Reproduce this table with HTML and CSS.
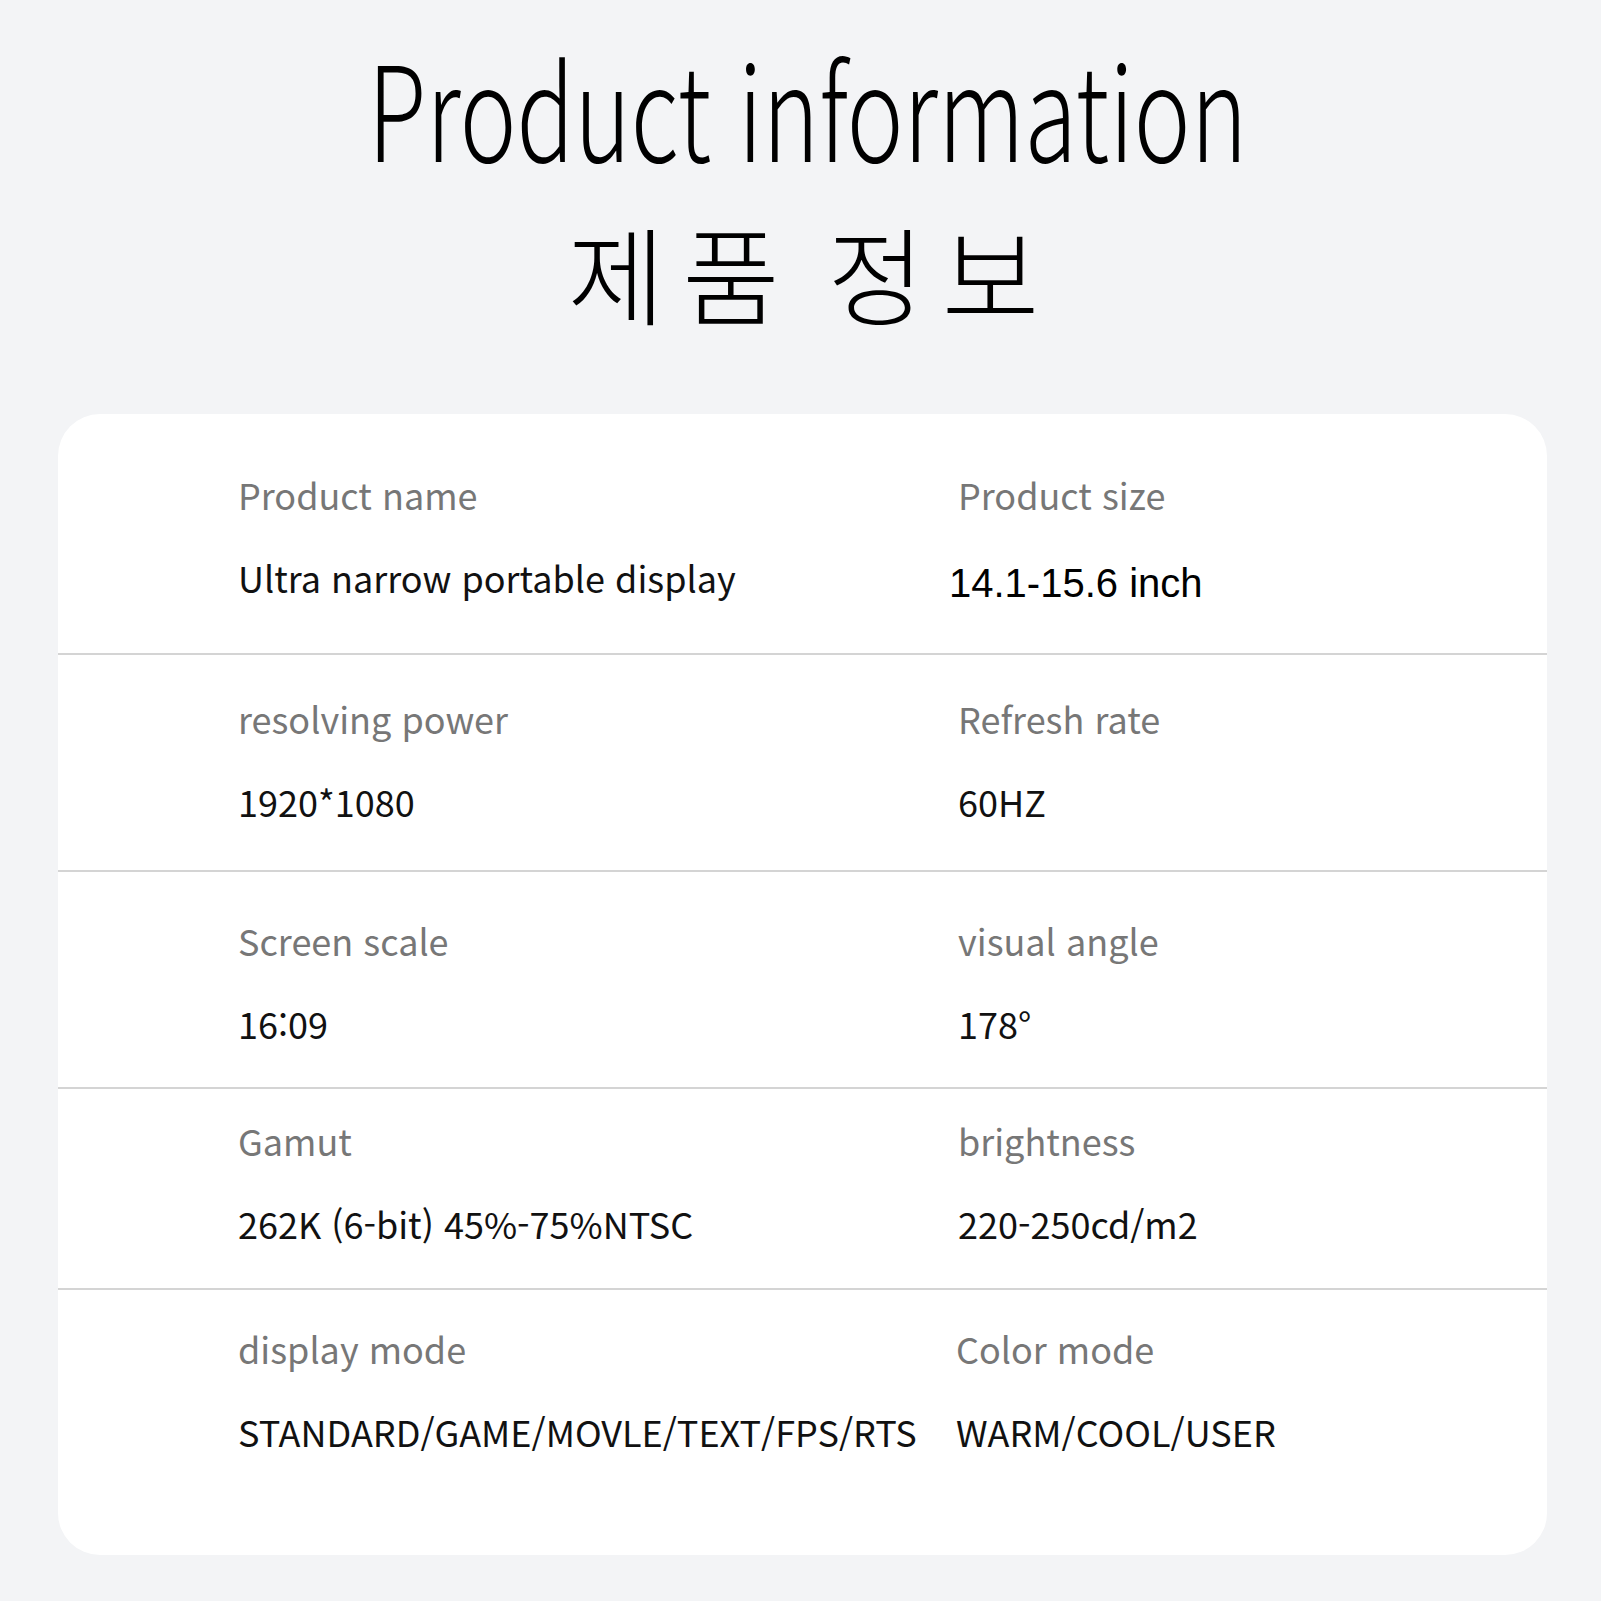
FILE: index.html
```html
<!DOCTYPE html>
<html lang="ko">
<head>
<meta charset="utf-8">
<title>Product information</title>
<link rel="stylesheet" href="styles.css">
</head>
<body>
<header class="hero">
  <h1 class="title-en"><span class="squeeze">Product information</span></h1>
  <p class="title-ko">제품 정보</p>
</header>
<section class="card">
  <div class="row row-1">
    <div class="cell"><div class="label">Product name</div><div class="value">Ultra narrow portable display</div></div>
    <div class="cell"><div class="label">Product size</div><div class="value value-arial"><span class="arial-shift">14.1-15.6 inch</span></div></div>
  </div>
  <div class="row row-2">
    <div class="cell"><div class="label">resolving power</div><div class="value">1920*1080</div></div>
    <div class="cell"><div class="label">Refresh rate</div><div class="value">60HZ</div></div>
  </div>
  <div class="row row-3">
    <div class="cell"><div class="label">Screen scale</div><div class="value">16:09</div></div>
    <div class="cell"><div class="label">visual angle</div><div class="value">178°</div></div>
  </div>
  <div class="row row-4">
    <div class="cell"><div class="label">Gamut</div><div class="value">262K (6-bit) 45%-75%NTSC</div></div>
    <div class="cell"><div class="label">brightness</div><div class="value">220-250cd/m2</div></div>
  </div>
  <div class="row row-5">
    <div class="cell"><div class="label">display mode</div><div class="value">STANDARD/GAME/MOVLE/TEXT/FPS/RTS</div></div>
    <div class="cell cell-shift"><div class="label">Color mode</div><div class="value">WARM/COOL/USER</div></div>
  </div>
</section>
</body>
</html>
```
FILE: styles.css
```css
html, body {
  margin: 0;
  padding: 0;
}
body {
  background: #f3f4f6;
  font-family: "Noto Sans CJK KR", "Noto Sans", sans-serif;
  color: #111;
  width: 1601px;
  height: 1601px;
  overflow: hidden;
}
.hero {
  text-align: center;
  padding-top: 30px;
  height: 384px;
  box-sizing: border-box;
}
.title-en {
  margin: 0;
  padding-left: 14px;
  font-weight: 300;
  font-size: 132px;
  line-height: 150px;
  color: #000;
}
.squeeze {
  display: inline-block;
  transform: scaleX(0.725);
  transform-origin: center;
  white-space: nowrap;
}
.title-ko {
  margin: 26px 0 0;
  font-weight: 300;
  font-size: 106px;
  line-height: 130px;
  letter-spacing: 17px;
  word-spacing: -16px;
  text-indent: 23px;
  color: #000;
}
.card {
  margin: 30px 54px 0 58px;
  background: #fff;
  border-radius: 42px;
  overflow: hidden;
}
.row {
  display: grid;
  grid-template-columns: 720px 1fr;
  padding-left: 180px;
  border-bottom: 2px solid #d4d4d4;
}
.row-5 { border-bottom: none; }
.row-1 { padding-top: 60px; padding-bottom: 56px; }
.row-2 { padding-top: 43px; padding-bottom: 49px; }
.row-3 { padding-top: 48px; padding-bottom: 44px; }
.row-4 { padding-top: 31px; padding-bottom: 45px; }
.row-5 { padding-top: 38px; padding-bottom: 104px; }
.cell {
  display: flex;
  flex-direction: column;
  gap: 43px;
}
.cell-shift { margin-left: -2px; }
.label {
  font-size: 36px;
  line-height: 40px;
  color: #777;
  white-space: nowrap;
}
.value {
  font-size: 36px;
  line-height: 40px;
  color: #111;
  white-space: nowrap;
}
.value-arial {
  font-family: "Liberation Sans", Arial, sans-serif;
  font-size: 40px;
  margin-left: -9px;
  color: #000;
}
.arial-shift {
  display: inline-block;
  transform: translateY(6px);
}
```
